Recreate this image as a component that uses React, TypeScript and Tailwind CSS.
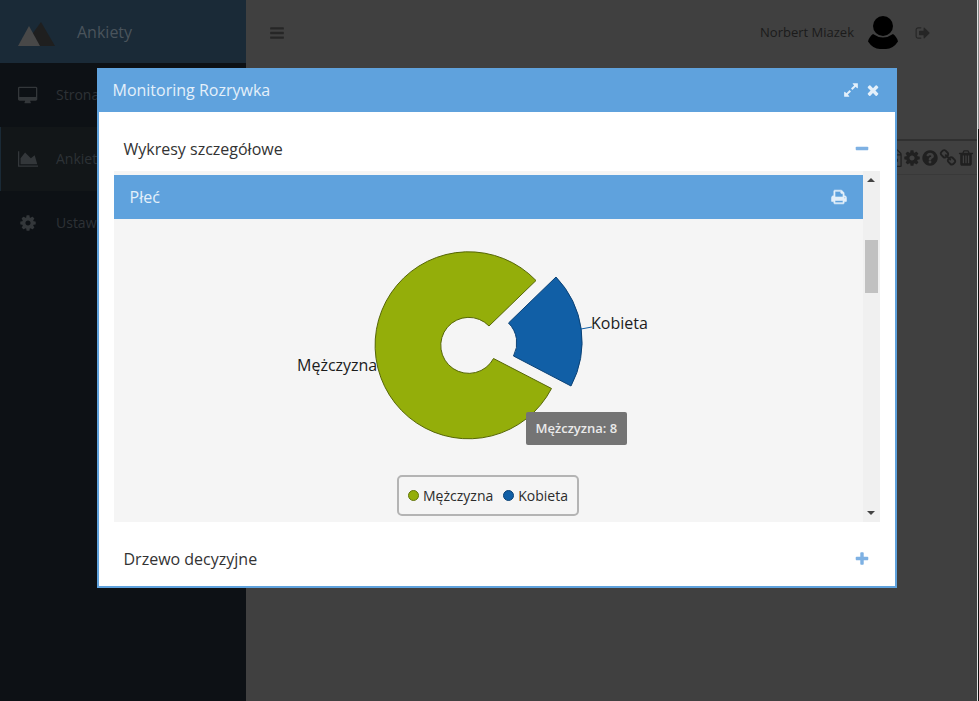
import React from "react";

type Shape = { box: string; d: string };

const shapes: Record<string, Shape> = {
  cog: {
    box: "0 0 1792 1792",
    d: "M1152 896q0-106-75-181t-181-75-181 75-75 181 75 181 181 75 181-75 75-181zm512-109v222q0 12-8 23t-20 13l-185 28q-19 54-39 91 35 50 107 138 10 12 10 25t-9 23q-27 37-99 108t-94 71q-12 0-26-9l-138-108q-44 23-91 38-16 136-29 186-7 28-36 28h-222q-14 0-24.5-8.5t-11.5-21.5l-28-184q-49-16-90-37l-141 107q-10 9-25 9-14 0-25-11-126-114-165-168-7-10-7-23 0-12 8-23 15-21 51-66.5t54-70.5q-27-50-41-99l-183-27q-13-2-21-12.5t-8-23.5v-222q0-12 8-23t19-13l186-28q14-46 39-92-40-57-107-138-10-12-10-24 0-10 9-23 26-36 98.5-107.5t94.5-71.5q13 0 26 10l138 107q44-23 91-38 16-136 29-186 7-28 36-28h222q14 0 24.5 8.5t11.5 21.5l28 184q49 16 90 37l142-107q9-9 24-9 13 0 25 10 129 119 165 170 7 8 7 22 0 12-8 23-15 21-51 66.5t-54 70.5q26 50 41 98l183 28q13 2 21 12.5t8 23.5z",
  },
  times: {
    box: "0 0 1792 1792",
    d: "M1490 1322q0 40-28 68l-136 136q-28 28-68 28t-68-28l-294-294-294 294q-28 28-68 28t-68-28l-136-136q-28-28-28-68t28-68l294-294-294-294q-28-28-28-68t28-68l136-136q28-28 68-28t68 28l294 294 294-294q28-28 68-28t68 28l136 136q28 28 28 68t-28 68l-294 294 294 294q28 28 28 68z",
  },
  expand: {
    box: "0 0 1792 1792",
    d: "M883 1056q0 13-10 23l-332 332 144 144q19 19 19 45t-19 45-45 19h-448q-26 0-45-19t-19-45v-448q0-26 19-45t45-19 45 19l144 144 332-332q10-10 23-10t23 10l114 114q10 10 10 23zm781-864v448q0 26-19 45t-45 19-45-19l-144-144-332 332q-10 10-23 10t-23-10l-114-114q-10-10-10-23t10-23l332-332-144-144q-19-19-19-45t19-45 45-19h448q26 0 45 19t19 45z",
  },
  bars: {
    box: "0 0 1792 1792",
    d: "M1664 1344v128q0 26-19 45t-45 19h-1408q-26 0-45-19t-19-45v-128q0-26 19-45t45-19h1408q26 0 45 19t19 45zm0-512v128q0 26-19 45t-45 19h-1408q-26 0-45-19t-19-45v-128q0-26 19-45t45-19h1408q26 0 45 19t19 45zm0-512v128q0 26-19 45t-45 19h-1408q-26 0-45-19t-19-45v-128q0-26 19-45t45-19h1408q26 0 45 19t19 45z",
  },
  plus: {
    box: "0 0 1792 1792",
    d: "M1600 736v192q0 40-28 68t-68 28h-416v416q0 40-28 68t-68 28h-192q-40 0-68-28t-28-68v-416h-416q-40 0-68-28t-28-68v-192q0-40 28-68t68-28h416v-416q0-40 28-68t68-28h192q40 0 68 28t28 68v416h416q40 0 68 28t28 68z",
  },
  minus: {
    box: "0 0 1792 1792",
    d: "M1600 736v192q0 40-28 68t-68 28h-1216q-40 0-68-28t-28-68v-192q0-40 28-68t68-28h1216q40 0 68 28t28 68z",
  },
  print: {
    box: "0 0 1792 1792",
    d: "M448 1536h896v-256h-896v256zm0-640h896v-384h-160q-40 0-68-28t-28-68v-160h-640v640zm1152 64q0-26-19-45t-45-19-45 19-19 45 19 45 45 19 45-19 19-45zm128 0v416q0 13-9.5 22.5t-22.5 9.5h-224v160q0 40-28 68t-68 28h-960q-40 0-68-28t-28-68v-160h-224q-13 0-22.5-9.5t-9.5-22.5v-416q0-79 56.5-135.5t135.5-56.5h64v-544q0-40 28-68t68-28h672q40 0 88 20t76 48l152 152q28 28 48 76t20 88v256h64q79 0 135.5 56.5t56.5 135.5z",
  },
  signOut: {
    box: "0 0 1792 1792",
    d: "M704 1440q0 4 1 20t.5 26.5-3 23.5-10 19.5-20.5 6.5h-320q-119 0-203.5-84.5t-84.5-203.5v-704q0-119 84.5-203.5t203.5-84.5h320q13 0 22.5 9.5t9.5 22.5q0 4 1 20t.5 26.5-3 23.5-10 19.5-20.5 6.5h-320q-66 0-113 47t-47 113v704q0 66 47 113t113 47h312l11.5 1 11.5 3 8 5.5 7 9 2 13.5zm928-544q0 26-19 45l-544 544q-19 19-45 19t-45-19-19-45v-288h-448q-26 0-45-19t-19-45v-384q0-26 19-45t45-19h448v-288q0-26 19-45t45-19 45 19l544 544q19 19 19 45z",
  },
  trash: {
    box: "0 0 1792 1792",
    d: "M704 1376v-704q0-14-9-23t-23-9h-64q-14 0-23 9t-9 23v704q0 14 9 23t23 9h64q14 0 23-9t9-23zm256 0v-704q0-14-9-23t-23-9h-64q-14 0-23 9t-9 23v704q0 14 9 23t23 9h64q14 0 23-9t9-23zm256 0v-704q0-14-9-23t-23-9h-64q-14 0-23 9t-9 23v704q0 14 9 23t23 9h64q14 0 23-9t9-23zm-544-992h448l-48-117q-7-9-17-11h-317q-10 2-17 11zm928 32v64q0 14-9 23t-23 9h-96v948q0 83-47 143.5t-113 60.5h-832q-66 0-113-58.5t-47-141.5v-952h-96q-14 0-23-9t-9-23v-64q0-14 9-23t23-9h309l70-167q15-37 54-63t79-26h320q40 0 79 26t54 63l70 167h309q14 0 23 9t9 23z",
  },
  question: {
    box: "0 0 1792 1792",
    d: "M1024 1376v-192q0-14-9-23t-23-9h-192q-14 0-23 9t-9 23v192q0 14 9 23t23 9h192q14 0 23-9t9-23zm256-672q0-88-55.5-163t-138.5-116-170-41q-243 0-371 213-15 24 8 42l132 100q7 6 19 6 16 0 25-12 53-68 86-92 34-24 86-24 48 0 85.5 26t37.5 59q0 38-20 61t-68 45q-63 28-115.5 86.5t-52.5 125.5v36q0 14 9 23t23 9h192q14 0 23-9t9-23q0-19 21.5-49.5t54.5-49.5q32-18 49-28.5t46-35 44.5-48 28-60.5 12.5-81zm384 192q0 209-103 385.5t-279.5 279.5-385.5 103-385.5-103-279.5-279.5-103-385.5 103-385.5 279.5-279.5 385.5-103 385.5 103 279.5 279.5 103 385.5z",
  },
  link: {
    box: "0 0 1792 1792",
    d: "M1520 1216q0-40-28-68l-208-208q-28-28-68-28-42 0-72 32 3 3 19 18.5t21.5 21.5 15 19 13 25.5 3.5 27.5q0 40-28 68t-68 28q-15 0-27.5-3.5t-25.5-13-19-15-21.5-21.5-18.5-19q-33 31-33 73 0 40 28 68l206 207q27 27 68 27 40 0 68-26l147-146q28-28 28-67zm-703-705q0-40-28-68l-206-207q-28-28-68-28-39 0-68 27l-147 146q-28 28-28 67 0 40 28 68l208 208q27 27 68 27 42 0 72-31-3-3-19-18.5t-21.5-21.5-15-19-13-25.5-3.5-27.5q0-40 28-68t68-28q15 0 27.5 3.5t25.5 13 19 15 21.5 21.5 18.5 19q33-31 33-73zm895 705q0 120-85 203l-147 146q-83 83-203 83-121 0-204-85l-206-207q-83-83-83-203 0-123 88-209l-88-88q-86 88-208 88-120 0-204-84l-208-208q-84-84-84-204t85-203l147-146q83-83 203-83 121 0 204 85l206 207q83 83 83 203 0 123-88 209l88 88q86-88 208-88 120 0 204 84l208 208q84 84 84 204z",
  },
  file: {
    box: "0 0 1792 1792",
    d: "M1596 380q28 28 48 76t20 88v1152q0 40-28 68t-68 28h-1344q-40 0-68-28t-28-68v-1600q0-40 28-68t68-28h896q40 0 88 20t76 48zm-444-244v376h376q-10-29-22-41l-313-313q-12-12-41-22zm384 1528v-1024h-416q-40 0-68-28t-28-68v-416h-768v1536h1280zm-640-700h400v300h-400z",
  },
  desktop: {
    box: "-64 -64 1920 1792",
    d: "M1728 992v-832q0-13-9.5-22.5t-22.5-9.5h-1600q-13 0-22.5 9.5t-9.5 22.5v832q0 13 9.5 22.5t22.5 9.5h1600q13 0 22.5-9.5t9.5-22.5zm128-832v1088q0 66-47 113t-113 47h-544q0 37 16 77.5t32 71 16 43.5q0 26-19 45t-45 19h-512q-26 0-45-19t-19-45q0-14 16-44t32-70 16-78h-544q-66 0-113-47t-47-113v-1088q0-66 47-113t113-47h1600q66 0 113 47t47 113z",
  },
  area: {
    box: "0 0 2048 1792",
    d: "M2048 1536v128h-2048v-1536h128v1408h1920zm-384-1024l256 896h-1664v-576l448-576 576 576z",
  },
};

function Icon({ name, className }: { name: string; className: string }) {
  const s = shapes[name];
  return (
    <svg viewBox={s.box} className={className} fill="currentColor" aria-hidden="true">
      <path d={s.d} />
    </svg>
  );
}

const menu = [
  { icon: "desktop", label: "Strona", active: false },
  { icon: "area", label: "Ankiety", active: true },
  { icon: "cog", label: "Ustaw", active: false },
];

const actions = [
  { icon: "file", label: "Raport" },
  { icon: "cog", label: "Ustawienia ankiety" },
  { icon: "question", label: "Pytania" },
  { icon: "link", label: "Odnośnik" },
  { icon: "trash", label: "Usuń" },
];

const legend = [
  { label: "Mężczyzna", dot: "border-[#63760a] bg-[#94ae0a]" },
  { label: "Kobieta", dot: "border-[#0b4276] bg-[#115fa6]" },
];

function Sidebar() {
  return (
    <aside className="w-[246px] shrink-0 bg-[#0d1115] text-[#33373a]">
      <div className="flex h-[63px] items-center bg-[#1a2a37] pl-[17px]">
        <svg viewBox="0 0 38 24" className="mt-1 h-6 w-[38px]" aria-hidden="true">
          <path d="M24 0L38 24H14L16 11z" fill="#1f1f1f" />
          <path d="M12 4L23 24H1z" fill="#484848" />
        </svg>
        <span className="pl-[22px] text-base text-[#4a545c]">Ankiety</span>
      </div>
      <nav>
        {menu.map((m) => (
          <a
            key={m.label}
            href="#"
            className={
              m.active
                ? "flex h-16 items-center border-l border-[#1a2a36] bg-[#121618] pl-4"
                : "flex h-16 items-center pl-[17px]"
            }
          >
            <span className="flex w-[22px] justify-center">
              <Icon name={m.icon} className="h-[18px]" />
            </span>
            <span className="pl-[17px] text-sm text-[#2d3236]">{m.label}</span>
          </a>
        ))}
      </nav>
    </aside>
  );
}

function Background() {
  return (
    <div className="flex min-h-screen">
      <Sidebar />
      <main className="min-w-0 flex-1 bg-[#404040]">
        <header className="flex h-16 items-center pt-px pr-[46px] pl-[23px] text-[#1b1b1b]">
          <button type="button" aria-label="Menu" className="text-[#262626]">
            <Icon name="bars" className="size-4" />
          </button>
          <span className="ml-auto text-[13px]">Norbert Miazek</span>
          <svg viewBox="0 0 32 34" className="ml-[13px] h-[34px] w-8" fill="#000" aria-hidden="true">
            <circle cx="16" cy="10" r="10" />
            <path d="M6 18Q16 25 26 18Q30 21 31 25.500Q26 33 19 33H13Q6 33 1 25.500Q2 21 6 18z" />
          </svg>
          <button type="button" aria-label="Wyloguj" className="ml-4 text-[#262626]">
            <Icon name="signOut" className="size-4" />
          </button>
        </header>
        <div className="mt-[75px] flex h-9 items-center justify-end border-t-2 border-b border-t-[#303030] border-b-[#393939] pr-[2px] text-[#202020]">
          {actions.map((a) => (
            <button key={a.icon} type="button" aria-label={a.label}>
              <Icon name={a.icon} className="size-[18px]" />
            </button>
          ))}
        </div>
      </main>
      <div className="flex w-[2px] flex-col border-l border-[#e4e4e4] bg-[#111]">
        <div className="h-[129px] bg-[#8a8a8a]" />
      </div>
    </div>
  );
}

function Chart() {
  return (
    <div className="relative flex h-[303px] flex-col items-center bg-[#f5f5f5]">
      <svg viewBox="0 0 400 236" className="mt-5 h-[236px] w-[400px] overflow-visible" role="img" aria-label="Płeć">
        <g strokeWidth="1">
          <path
            d="M248 41.500A93.500 93.500 0 1 0 263.500 149.500L205.500 119.500A28 28 0 1 1 201 87Z"
            fill="#94ae0a"
            stroke="#566606"
          />
          <path d="M268 38A93.500 93.500 0 0 1 283 147L225.500 117A28 28 0 0 0 220.500 84Z" fill="#115fa6" stroke="#0b4276" />
          <path d="M293 90L304 88" stroke="#115fa6" />
        </g>
        <g fontSize="16" fill="#1c1c1c">
          <text x="9" y="132">Mężczyzna</text>
          <text x="303" y="90">Kobieta</text>
        </g>
      </svg>
      <div className="flex h-[41px] items-center gap-2.5 rounded-[5px] border-2 border-[#b4b4b4] px-[9px]">
        {legend.map((l) => (
          <span key={l.label} className="flex items-center gap-1 text-sm text-[#2c2c2c]">
            <span className={"size-[11px] rounded-full border " + l.dot} />
            {l.label}
          </span>
        ))}
      </div>
      <div
        role="tooltip"
        className="absolute top-[193px] left-[412px] rounded-xs bg-[#747474] px-2.5 py-1.5 text-[13px] leading-[21px] font-semibold text-[#eaeaea]"
      >
        Mężczyzna: 8
      </div>
    </div>
  );
}

function ScrollTrack() {
  return (
    <div className="flex w-[17px] shrink-0 flex-col items-center bg-[#f0f0f0] py-[7px]">
      <svg viewBox="0 0 8 4" className="h-1 w-2" aria-hidden="true">
        <path d="M0 4L4 0L8 4z" fill="#444" />
      </svg>
      <div className="mt-[58px] h-[53px] w-[13px] bg-[#c1c1c1]" />
      <svg viewBox="0 0 8 4" className="mt-auto h-1 w-2" aria-hidden="true">
        <path d="M0 0L4 4L8 0z" fill="#444" />
      </svg>
    </div>
  );
}

function AccordionBar({ label, icon, hint }: { label: string; icon: string; hint: string }) {
  return (
    <h3 className="flex h-11 items-center justify-between px-2.5 text-base text-[#333]">
      {label}
      <button type="button" aria-label={hint} className="text-[#7eb1e3]">
        <Icon name={icon} className="size-4" />
      </button>
    </h3>
  );
}

function Dialog() {
  return (
    <section
      role="dialog"
      aria-label="Monitoring Rozrywka"
      className="absolute top-[68px] left-1/2 w-[800px] max-w-full -translate-x-[393px] border-2 border-t-0 border-[#5fa2dd] bg-white"
    >
      <header className="flex h-11 items-center bg-[#5fa2dd] pr-3.5 pl-3.5 text-[#e4f0fa]">
        <h2 className="flex-1 text-base">Monitoring Rozrywka</h2>
        <button type="button" aria-label="Powiększ">
          <Icon name="expand" className="size-4" />
        </button>
        <button type="button" aria-label="Zamknij" className="ml-1.5">
          <Icon name="times" className="size-4" />
        </button>
      </header>
      <div className="px-[15px] pt-[15px] pb-[5px]">
        <AccordionBar label="Wykresy szczegółowe" icon="minus" hint="Zwiń" />
        <div className="flex">
          <div className="min-w-0 flex-1 bg-[#f5f5f5] pt-1">
            <div className="flex h-11 items-center justify-between bg-[#5fa2dd] px-4 text-[#e4f0fa]">
              <h4 className="text-base">Płeć</h4>
              <button type="button" aria-label="Drukuj">
                <Icon name="print" className="size-4 stroke-current stroke-[70]" />
              </button>
            </div>
            <Chart />
          </div>
          <ScrollTrack />
        </div>
        <div className="pt-[15px]">
          <AccordionBar label="Drzewo decyzyjne" icon="plus" hint="Rozwiń" />
        </div>
      </div>
    </section>
  );
}

export default function App() {
  return (
    <div className="relative min-h-screen overflow-hidden font-['Open_Sans',sans-serif]">
      <Background />
      <Dialog />
    </div>
  );
}
